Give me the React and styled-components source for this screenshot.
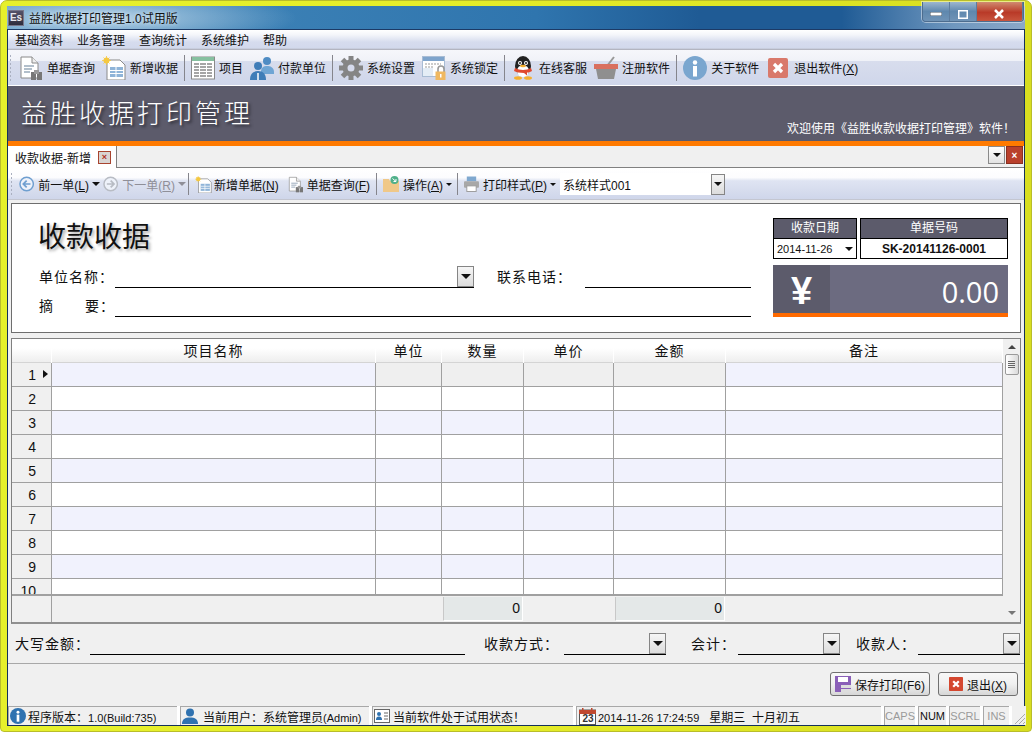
import styled, { createGlobalStyle } from 'styled-components'

const GlobalStyle = createGlobalStyle`
html, body { margin:0; padding:0; background:#fff; overflow:hidden; }
* { box-sizing:border-box; }
body { font-family:"Liberation Sans","Noto Sans CJK SC",sans-serif; font-size:12px; color:#111; }
`

const Frame = styled.div`
width:1032px;
height:732px;
padding:6px 7px;
position:relative;
background:linear-gradient(90deg,#e6f02c 0,#e6ee2a 40%,#d8de20 100%);
border:1px solid #b9bd2a;
border-radius:7px 7px 4px 4px;
`

const Win = styled.div`
height:720px;
margin:-1px -1px 0 -1px;
display:flex;
flex-direction:column;
`

const TitleBar = styled.div`
height:23px;
flex:none;
display:flex;
align-items:center;
gap:5px;
padding-left:1px;
background:
  radial-gradient(ellipse 200px 30px at 90px 12px,rgba(205,225,240,.85),rgba(205,225,240,0)),
  linear-gradient(90deg,#4f8fbe 0,#3b80b5 25%,#2f75ae 52%,#1f5b95 68%,#1f5b95 82%,#6f97bf 93%,#8ba8c8 100%);
`

const AppIcon = styled.div`
width:16px;
height:16px;
background:linear-gradient(#55536a,#2e2d3c);
border:1px solid #77768a;
color:#e8e8ee;
font-size:10px;
font-weight:bold;
line-height:14px;
text-align:center;
`

const AppTitle = styled.div`
font-size:12px;
color:#111;
text-shadow:0 0 4px #e8f2fa;
`

const WinButtons = styled.div`
position:absolute;
top:1px;
right:7px;
height:20px;
width:102px;
display:flex;
border:1px solid #4d6d8f;
border-top:none;
border-radius:0 0 4px 4px;
overflow:hidden;
box-shadow:0 0 0 1px rgba(255,255,255,.45);
`

const WinBtn = styled.div`
width:${p => p.$w}px;
display:flex;
align-items:center;
justify-content:center;
padding-top:5px;
border-right:1px solid #5d7d9f;
background:${p => p.$close ? 'linear-gradient(#d08a70,#b93a28 55%,#c8553e)' : 'linear-gradient(#9db6cf,#5f88ae 50%,#6f93b6)'};
`

const Body = styled.div`
flex:1;
display:flex;
flex-direction:column;
min-height:0;
border:1px solid #14305a;
border-top-color:#1c3a66;
border-bottom-width:1px;
background:#f0f0f0;
`

const MenuBar = styled.div`
height:20px;
flex:none;
display:flex;
align-items:center;
padding:0 0 2px 7px;
gap:14px;
background:linear-gradient(#fff 0,#f3f5fa 25%,#d6dcee 60%,#d2d9ec 90%,#a9a9b2 100%);
`

const MenuItem = styled.span`
font-size:12px;
`

const ToolBar = styled.div`
height:36px;
flex:none;
display:flex;
align-items:center;
gap:7px;
padding-left:1px;
border-bottom:1px solid #fff;
background:linear-gradient(#f6f7fb 0,#f0f2f8 30%,#d8dded 32%,#cfd6ea 100%);
`

const Grip = styled.div`
width:3px;
height:${p => p.$h}px;
flex:none;
background-image:radial-gradient(#aab0c0 1px,transparent 1px);
background-size:3px 4px;
`

const Tool = styled.div`
display:flex;
align-items:center;
flex:none;
gap:${p => p.$gap ?? 4}px;
width:${p => p.$w ? `${p.$w}px` : 'auto'};
margin-left:${p => p.$ml || 0}px;
font-size:12px;
white-space:nowrap;
color:${p => p.$off ? '#8f8f98' : '#111'};
`

const Sep = styled.div`
width:1px;
height:${p => p.$h}px;
flex:none;
margin-left:${p => p.$ml ?? -1}px;
margin-right:${p => p.$mr ?? -1}px;
background:#85858c;
`

const Caret = styled.i`
display:block;
width:0;
height:0;
flex:none;
border-left:${p => p.$s}px solid transparent;
border-right:${p => p.$s}px solid transparent;
border-top:${p => p.$up ? 'none' : `${p.$s}px solid ${p.$c || '#111'}`};
border-bottom:${p => p.$up ? `${p.$s}px solid ${p.$c || '#111'}` : 'none'};
`

const Banner = styled.div`
height:60px;
flex:none;
display:flex;
justify-content:space-between;
background:#5c5b6b;
border-bottom:5px solid #ff7a00;
color:#fff;
`

const BannerTitle = styled.div`
font-size:26px;
letter-spacing:3px;
font-weight:300;
margin:10px 0 0 13px;
line-height:36px;
text-shadow:2px 2px 3px #2a2a33;
`

const BannerNote = styled.div`
align-self:flex-end;
font-size:12px;
margin:0 9px 5px 0;
`

const TabStrip = styled.div`
height:22px;
flex:none;
display:flex;
align-items:flex-start;
justify-content:space-between;
background:#f0f0f0;
border-bottom:1px solid #808080;
`

const Tab = styled.div`
width:109px;
height:22px;
display:flex;
align-items:center;
gap:7px;
padding-left:7px;
background:#fff;
border-right:1px solid #808080;
font-size:12px;
`

const TabClose = styled.div`
width:13px;
height:13px;
display:flex;
align-items:center;
justify-content:center;
border:1px solid #a8442f;
background:#d9d5d3;
color:#b0301f;
font-size:9px;
font-weight:bold;
line-height:1;
`

const TabActions = styled.div`
display:flex;
gap:1px;
padding-right:1px;
`

const SmallDrop = styled.div`
width:17px;
height:18px;
display:flex;
align-items:center;
justify-content:center;
background:${p => p.$red ? '#b9402c' : 'linear-gradient(#fff,#e2e2e2)'};
border:1px solid ${p => p.$red ? '#8a3020' : '#8a8a8a'};
color:#fff;
font-size:10px;
font-weight:bold;
`

const SubBar = styled.div`
height:32px;
flex:none;
display:flex;
align-items:center;
gap:3px;
padding-left:2px;
background:linear-gradient(#fff 0,#fcfcfe 30%,#dfe4f2 40%,#cfd6ea 96%,#bcbcc0 100%);
`

const Combo = styled.div`
width:165px;
height:22px;
display:flex;
justify-content:space-between;
align-items:center;
margin-left:1px;
padding-left:3px;
background:#fff;
font-size:12px;
`

const DropBtn = styled.div`
width:${p => p.$w || 14}px;
height:${p => p.$h || 21}px;
flex:none;
display:flex;
align-items:center;
justify-content:center;
background:linear-gradient(#f6f6f6,#dcdcdc);
border:1px solid #858585;
`

const Content = styled.div`
flex:1;
min-height:0;
display:flex;
flex-direction:column;
padding:3px 3px 0 3px;
`

const Panel = styled.div`
height:130px;
flex:none;
display:flex;
padding-left:27px;
gap:22px;
background:#fff;
border:1px solid #6e6e6e;
`

const PanelLeft = styled.div`
width:712px;
`

const BigTitle = styled.div`
font-size:28px;
line-height:34px;
margin-top:17px;
margin-left:-1px;
height:45px;
text-shadow:2px 2px 3px #aaa;
`

const FieldRow = styled.div`
display:flex;
align-items:flex-end;
height:${p => p.$h}px;
margin-bottom:${p => p.$mb || 0}px;
`

const Label = styled.div`
font-size:14px;
letter-spacing:1px;
width:${p => p.$w}px;
flex:none;
white-space:nowrap;
line-height:20px;
padding-bottom:${p => p.$pb ?? 1}px;
margin-left:${p => p.$ml || 0}px;
display:flex;
justify-content:${p => p.$spread ? 'space-between' : 'flex-start'};
`

const Line = styled.div`
width:${p => p.$w}px;
height:${p => p.$h || 22}px;
flex:none;
display:flex;
justify-content:flex-end;
border-bottom:1px solid #000;
`

const PanelRight = styled.div`
width:235px;
padding-top:14px;
`

const InfoRow = styled.div`
display:flex;
gap:3px;
`

const InfoBox = styled.div`
width:${p => p.$w}px;
border:1px solid #000;
`

const InfoHead = styled.div`
height:20px;
background:#5c5b6b;
border-bottom:1px solid #000;
color:#fff;
font-size:12px;
line-height:19px;
text-align:center;
`

const InfoValue = styled.div`
height:19px;
display:flex;
align-items:center;
justify-content:${p => p.$between ? 'space-between' : 'center'};
padding:0 3px;
background:#fff;
font-size:${p => p.$bold ? 12 : 11}px;
font-weight:${p => p.$bold ? 'bold' : 'normal'};
`

const Amount = styled.div`
height:52px;
margin-top:6px;
display:flex;
background:#6c6b80;
border-bottom:4px solid #ff6a00;
color:#fff;
`

const Yuan = styled.div`
width:57px;
display:flex;
align-items:center;
justify-content:center;
padding-top:4px;
background:#5c5b6b;
font-size:38px;
font-weight:bold;
`

const AmountValue = styled.div`
flex:1;
text-align:right;
padding-right:9px;
font-size:29px;
line-height:54px;
font-family:"Open Sans",sans-serif;
`

const Table = styled.div`
height:286px;
flex:none;
margin-top:5px;
display:flex;
background:#f0f0f0;
border:1px solid #808080;
border-bottom-color:#909090;
border-bottom-width:2px;
`

const TableMain = styled.div`
width:991px;
flex:none;
display:flex;
flex-direction:column;
`

const Cols = styled.div`
display:grid;
grid-template-columns:40px 324px 66px 82px 90px 112px 277px;
`

const HeadRow = styled(Cols)`
height:24px;
flex:none;
background:linear-gradient(#fff 0,#fff 40%,#eeeeee 100%);
border-bottom:1px solid #d4d4d4;
`

const HeadCell = styled.div`
font-size:14px;
letter-spacing:1px;
line-height:24px;
text-align:center;
border-right:1px solid #fff;
`

const Rows = styled.div`
height:233px;
flex:none;
overflow:hidden;
border-bottom:2px solid #a0a0a0;
`

const RowWrap = styled(Cols)`
height:24px;
`

const RowNum = styled.div`
display:flex;
align-items:center;
justify-content:flex-end;
position:relative;
padding-right:15px;
font-size:14px;
background:#f0f0f0;
border-right:1px solid #a0a0a0;
border-bottom:1px solid #a0a0a0;
`

const Marker = styled.i`
position:absolute;
right:3px;
top:7px;
width:0;
height:0;
border-top:4px solid transparent;
border-bottom:4px solid transparent;
border-left:5px solid #111;
`

const Cell = styled.div`
background:${p => p.$bg};
border-right:1px solid #a0a0a0;
border-bottom:1px solid #a0a0a0;
`

const FootRow = styled(Cols)`
flex:1;
min-height:0;
background:#f0f0f0;
`

const FootCell = styled.div`
border-right:${p => p.$line ? '1px solid #a0a0a0' : 'none'};
`

const SumCell = styled.div`
height:24px;
margin:1px 1px 0 1px;
background:#e4e8e8;
border-left:1px solid #c8c8c8;
border-right:1px solid #fff;
border-bottom:1px solid #fff;
font-size:14px;
text-align:right;
padding-right:2px;
line-height:23px;
`

const ScrollTrack = styled.div`
flex:1;
position:relative;
display:flex;
flex-direction:column;
align-items:center;
padding-top:6px;
background:#f0f0f0;
`

const Thumb = styled.div`
width:14px;
height:21px;
margin-top:5px;
display:flex;
flex-direction:column;
align-items:center;
justify-content:center;
gap:1px;
background:linear-gradient(90deg,#fff,#dadada);
border:1px solid #9a9a9a;
border-radius:2px;
`

const ThumbLine = styled.i`
display:block;
width:7px;
height:1px;
background:#666;
`

const ScrollEnd = styled.div`
margin-top:auto;
margin-bottom:7px;
`

const BottomFields = styled.div`
height:39px;
flex:none;
display:flex;
align-items:flex-end;
padding:0 0 8px 4px;
`

const Divider = styled.div`
height:1px;
flex:none;
margin:0 -3px;
background:#a8a8a8;
`

const Actions = styled.div`
flex:1;
display:flex;
justify-content:flex-end;
align-items:flex-start;
gap:8px;
padding:8px 3px 0 0;
`

const Button = styled.div`
width:${p => p.$w}px;
height:24px;
display:flex;
align-items:center;
justify-content:center;
gap:4px;
font-size:12px;
background:linear-gradient(#f8f8f8,#f0f0f0 50%,#d6d6d6);
border:1px solid #707070;
border-radius:3px;
`

const StatusBar = styled.div`
height:19px;
flex:none;
display:flex;
align-items:stretch;
gap:3px;
margin-top:auto;
background:#fff;
position:relative;
`

const StatusCell = styled.div`
width:${p => p.$w}px;
flex:none;
display:flex;
align-items:center;
gap:${p => p.$gap ?? 2}px;
padding-left:1px;
font-size:12px;
white-space:nowrap;
background:#f0f0f0;
border-top:1px solid #a8a8a8;
border-left:1px solid #a8a8a8;
overflow:hidden;
`

const Small = styled.span`
font-size:11px;
`

const Lock = styled.div`
width:${p => p.$w}px;
flex:none;
text-align:center;
font-size:11px;
line-height:18px;
color:${p => p.$on ? '#111' : '#9a9a9a'};
background:#f0f0f0;
border-top:1px solid #a8a8a8;
border-left:1px solid #a8a8a8;
`

const Spacer = styled.div`
flex:1;
display:flex;
justify-content:flex-end;
align-items:flex-end;
background:#f0f0f0;
`

const U = styled.span`
text-decoration:underline;
`

/* ---------- icons ---------- */
const DocGlass = ({ s = 24 }) => <svg width={s} height={s} viewBox="0 0 24 24">
  <path d="M2 1h11l6 6v15H2z" fill="#fff" stroke="#8a8a8a" />
  <path d="M13 1v6h6" fill="#eee" stroke="#8a8a8a" />
  <path d="M5 10h10M5 13h8M5 16h6" stroke="#9ab" strokeWidth="1.5" />
  <rect x="12" y="16" width="5" height="8" fill="#777" /><rect x="18" y="16" width="5" height="8" fill="#777" />
  <rect x="15" y="14" width="5" height="4" fill="#999" />
</svg>
const DocNew = ({ s = 24 }) => <svg width={s} height={s} viewBox="0 0 24 24">
  <path d="M5 4h13l5 5v15H5z" fill="#fff" stroke="#8a8a8a" />
  <rect x="8" y="11" width="13" height="10" fill="#8fb4d8" />
  <path d="M8 14.5h13M8 17.5h13M14 11v10" stroke="#fff" />
  <circle cx="4.5" cy="4.5" r="3" fill="#f5c840" />
  <path d="M4.5 0v9M0 4.500h9M1.500 1.500l6 6M7.500 1.500l-6 6" stroke="#f5c840" strokeWidth=".8" />
</svg>
const TableIcon = () => <svg width="24" height="24" viewBox="0 0 24 24">
  <rect x=".5" y="1" width="23" height="22" fill="#fff" stroke="#8a8a8a" />
  <rect x="1" y="1" width="22" height="4" fill="#86c0a0" />
  <path d="M3 8h18M3 11h18M3 14h18M3 17h18M3 20h18" stroke="#888" strokeWidth="1.4" />
  <path d="M8.500 7v14M15.500 7v14" stroke="#fff" />
</svg>
const People = () => <svg width="24" height="24" viewBox="0 0 24 24">
  <circle cx="17" cy="5" r="4" fill="#4f8cc4" /><path d="M11 16c0-5 3-6 6-6s7 1 7 6v2H11z" fill="#6fa5d4" />
  <circle cx="8" cy="10" r="4" fill="#3f7db8" /><path d="M0 24c0-6 3-9 8-9s8 3 8 9z" fill="#3f7db8" />
  <path d="M8 17v7" stroke="#fff" strokeWidth="1.5" />
</svg>
const Gear = () => <svg width="24" height="24" viewBox="0 0 24 24">
  <g fill="#858585">
    <circle cx="12" cy="12" r="8.500" />
    {[0, 45, 90, 135, 180, 225, 270, 315].map(a => <rect key={a} x="9.500" y="0" width="5" height="5" transform={`rotate(${a} 12 12)`} />)}
  </g>
  <circle cx="12" cy="12" r="3.500" fill="#d6dbec" />
</svg>
const WindowLock = () => <svg width="24" height="24" viewBox="0 0 24 24">
  <rect x=".5" y=".5" width="22" height="20" fill="#fff" stroke="#a8bcd4" />
  <rect x="1" y="1" width="21" height="4" fill="#7ea4cc" />
  <path d="M3 8h16M3 11h8" stroke="#999" strokeDasharray="2 1" />
  <rect x="1" y="12" width="10" height="8" fill="#e4edf6" />
  <path d="M16 16v-3a3 3 0 016 0v3" fill="none" stroke="#999" strokeWidth="1.600" />
  <rect x="13.500" y="15.500" width="10" height="8.500" fill="#f0b860" />
  <rect x="18" y="18" width="1.500" height="3.500" fill="#fff" />
</svg>
const Penguin = () => <svg width="24" height="24" viewBox="0 0 24 24">
  <ellipse cx="12" cy="10" rx="8" ry="10" fill="#222" />
  <ellipse cx="12" cy="15" rx="6" ry="6" fill="#fff" />
  <circle cx="9" cy="7" r="2" fill="#fff" /><circle cx="15" cy="7" r="2" fill="#fff" />
  <circle cx="9" cy="7" r="1" fill="#222" /><circle cx="15" cy="7" r="1" fill="#222" />
  <ellipse cx="12" cy="10" rx="3" ry="1.300" fill="#f5b030" />
  <path d="M4 12c5 2.500 11 2.500 16 0l1 3c-2 1-4 1.500-5 1.500v3l-3-2.500C9 17 5 16 3 15z" fill="#e04a30" />
  <ellipse cx="7" cy="22" rx="4" ry="1.800" fill="#f5b030" /><ellipse cx="17" cy="22" rx="4" ry="1.800" fill="#f5b030" />
</svg>
const Basket = () => <svg width="24" height="24" viewBox="0 0 24 24">
  <path d="M13 10l7-9" stroke="#999" strokeWidth="2" />
  <rect x="0" y="8" width="24" height="5" fill="#d9705f" />
  <path d="M2 13h20l-2 10H4z" fill="#8f8f8f" />
</svg>
const InfoCircle = ({ s = 24 }) => <svg width={s} height={s} viewBox="0 0 24 24">
  <circle cx="12" cy="12" r="12" fill={s < 24 ? '#2f72b0' : '#7aa6cf'} />
  <circle cx="12" cy="6.500" r="2.200" fill="#fff" />
  <rect x="10" y="10" width="4" height="10.500" fill="#fff" />
</svg>
const RedX = ({ s, c = '#d9796b', r = 2 }) => <svg width={s} height={s} viewBox="0 0 20 20">
  <rect width="20" height="20" rx={r} fill={c} />
  <path d="M6 6l8 8M14 6l-8 8" stroke="#fff" strokeWidth="3.200" />
</svg>
const Arrow = ({ c, flip }) => <svg width="16" height="16" viewBox="0 0 16 16">
  <circle cx="8" cy="8" r="7" fill="#eef2fa" stroke={c} strokeWidth="1.500" />
  <path d={flip ? 'M4 8h7M8 4.500L11.500 8 8 11.500' : 'M12 8H5M8 4.500L4.500 8 8 11.500'} fill="none" stroke={c} strokeWidth="1.800" />
</svg>
const FolderGo = () => <svg width="16" height="16" viewBox="0 0 16 16">
  <path d="M0 3h6l1 2h9v11H0z" fill="#f0c888" />
  <circle cx="11.500" cy="4" r="4" fill="#4fb08a" />
  <path d="M9.500 2.500l3.500 3M13 3v2.500h-2.500" fill="none" stroke="#fff" />
</svg>
const Printer = () => <svg width="16" height="16" viewBox="0 0 16 16">
  <rect x="3" y="0" width="10" height="5" fill="#7fa8cf" />
  <rect x="0" y="5" width="16" height="7" rx="1" fill="#a8a8a8" />
  <rect x="3" y="10" width="10" height="6" fill="#fff" stroke="#999" />
</svg>
const Floppy = () => <svg width="16" height="16" viewBox="0 0 16 16">
  <rect width="16" height="16" fill="#8a5fb8" />
  <rect x="3" y="1" width="10" height="5" fill="#fff" />
  <rect x="6" y="9" width="10" height="3" fill="#ddd" /><rect x="6" y="13" width="10" height="3" fill="#ddd" />
</svg>
const User = () => <svg width="16" height="16" viewBox="0 0 16 16">
  <circle cx="8" cy="4.500" r="4" fill="#2f72b0" />
  <path d="M0 16c0-5 3-6.500 8-6.500s8 1.500 8 6.500z" fill="#2f72b0" />
</svg>
const IdCard = () => <svg width="16" height="14" viewBox="0 0 16 14">
  <rect x=".5" y=".5" width="15" height="13" fill="#fff" stroke="#666" />
  <circle cx="5" cy="5" r="2" fill="#2f72b0" /><path d="M2 11c0-3 1.500-3.500 3-3.500S8 8 8 11z" fill="#2f72b0" />
  <path d="M10 4h4M10 7h4M10 10h4" stroke="#666" />
</svg>
const Calendar = () => <svg width="17" height="17" viewBox="0 0 17 17">
  <rect x=".5" y="2" width="16" height="14.500" fill="#fff" stroke="#555" />
  <rect x="0" y="2" width="17" height="4" fill="#c0492f" />
  <rect x="3" y="0" width="1.500" height="4" fill="#c0492f" /><rect x="12" y="0" width="1.500" height="4" fill="#c0492f" />
</svg>
const CalDay = styled.span`
position:relative;
display:block;
width:17px;
height:17px;
flex:none;
margin-left:1px;
`
const CalText = styled.span`
position:absolute;
left:1px;
right:0;
top:6px;
text-align:center;
font-size:10px;
font-weight:bold;
line-height:10px;
color:#333;
`
const ResizeGrip = () => <svg width="14" height="14" viewBox="0 0 14 14">
  <path d="M13 3L3 13M13 7L7 13M13 11L11 13" stroke="#aaa" />
</svg>

const rows = [1, 2, 3, 4, 5, 6, 7, 8, 9, 10]

const RowLine = ({ n }) => {
  const bg = n % 2 ? '#f1f2fd' : '#fff'
  const mid = n === 1 ? '#efefef' : bg
  return <RowWrap>
    <RowNum>{n}{n === 1 && <Marker />}</RowNum>
    <Cell $bg={bg} /><Cell $bg={mid} /><Cell $bg={mid} /><Cell $bg={mid} /><Cell $bg={mid} /><Cell $bg={bg} />
  </RowWrap>
}

const App = () => {
  return (<Frame>
    <GlobalStyle />
    <WinButtons>
      <WinBtn $w={28}><svg width="12" height="4"><rect width="12" height="4" fill="#fff" stroke="#456" /></svg></WinBtn>
      <WinBtn $w={27}><svg width="10" height="9"><rect x=".5" y=".5" width="9" height="8" fill="none" stroke="#fff" strokeWidth="2" /></svg></WinBtn>
      <WinBtn $w={47} $close><svg width="12" height="10"><path d="M2 1l8 8M10 1l-8 8" stroke="#fff" strokeWidth="2.500" /></svg></WinBtn>
    </WinButtons>
    <Win>
      <TitleBar>
        <AppIcon>Es</AppIcon>
        <AppTitle>益胜收据打印管理1.0试用版</AppTitle>
      </TitleBar>
      <Body>
        <MenuBar>
          <MenuItem>基础资料</MenuItem>
          <MenuItem>业务管理</MenuItem>
          <MenuItem>查询统计</MenuItem>
          <MenuItem>系统维护</MenuItem>
          <MenuItem>帮助</MenuItem>
        </MenuBar>
        <ToolBar>
          <Grip $h={28} />
          <Tool><DocGlass /><span>单据查询</span></Tool>
          <Tool><DocNew /><span>新增收据</span></Tool>
          <Sep $h={26} />
          <Tool><TableIcon /><span>项目</span></Tool>
          <Tool><People /><span>付款单位</span></Tool>
          <Sep $h={26} />
          <Tool><Gear /><span>系统设置</span></Tool>
          <Tool><WindowLock /><span>系统锁定</span></Tool>
          <Sep $h={26} />
          <Tool><Penguin /><span>在线客服</span></Tool>
          <Tool><Basket /><span>注册软件</span></Tool>
          <Sep $h={26} />
          <Tool><InfoCircle /><span>关于软件</span></Tool>
          <Tool $ml={2} $gap={6}><RedX s={20} /><span>退出软件(<U>X</U>)</span></Tool>
        </ToolBar>
        <Banner>
          <BannerTitle>益胜收据打印管理</BannerTitle>
          <BannerNote>欢迎使用《益胜收款收据打印管理》软件！</BannerNote>
        </Banner>
        <TabStrip>
          <Tab>收款收据-新增<TabClose>×</TabClose></Tab>
          <TabActions>
            <SmallDrop><Caret $s={4} /></SmallDrop>
            <SmallDrop $red>×</SmallDrop>
          </TabActions>
        </TabStrip>
        <SubBar>
          <Grip $h={24} />
          <Tool $ml={3} $w={70}><Arrow c="#6f9fd0" /><span>前一单(<U>L</U>)</span></Tool>
          <Caret $s={4} />
          <Tool $w={72} $off><Arrow c="#b8bcc4" flip /><span>下一单(<U>R</U>)</span></Tool>
          <Caret $s={4} $c="#8f8f98" />
          <Sep $h={22} $mr={0} />
          <Tool $ml={3} $w={86} $gap={2}><DocNew s={17} /><span>新增单据(<U>N</U>)</span></Tool>
          <Tool $ml={4} $w={82} $gap={3}><DocGlass s={17} /><span>单据查询(<U>F</U>)</span></Tool>
          <Sep $h={22} $ml={3} $mr={0} />
          <Tool $ml={3} $w={60}><FolderGo /><span>操作(<U>A</U>)</span></Tool>
          <Caret $s={3} />
          <Sep $h={22} $ml={2} $mr={0} />
          <Tool $ml={3} $w={83}><Printer /><span>打印样式(<U>P</U>)</span></Tool>
          <Caret $s={3} />
          <Combo>系统样式001<DropBtn><Caret $s={4} /></DropBtn></Combo>
        </SubBar>
        <Content>
          <Panel>
            <PanelLeft>
              <BigTitle>收款收据</BigTitle>
              <FieldRow $h={22} $mb={7}>
                <Label $w={76}>单位名称：</Label>
                <Line $w={359}><DropBtn $w={17}><Caret $s={5} /></DropBtn></Line>
                <Label $w={88} $ml={23}>联系电话：</Label>
                <Line $w={166} />
              </FieldRow>
              <FieldRow $h={22}>
                <Label $w={76} $spread><span>摘</span><span>要：</span></Label>
                <Line $w={636} />
              </FieldRow>
            </PanelLeft>
            <PanelRight>
              <InfoRow>
                <InfoBox $w={84}>
                  <InfoHead>收款日期</InfoHead>
                  <InfoValue $between>2014-11-26<Caret $s={4} /></InfoValue>
                </InfoBox>
                <InfoBox $w={148}>
                  <InfoHead>单据号码</InfoHead>
                  <InfoValue $bold>SK-20141126-0001</InfoValue>
                </InfoBox>
              </InfoRow>
              <Amount>
                <Yuan>¥</Yuan>
                <AmountValue>0.00</AmountValue>
              </Amount>
            </PanelRight>
          </Panel>
          <Table>
            <TableMain>
              <HeadRow>
                <HeadCell />
                <HeadCell>项目名称</HeadCell>
                <HeadCell>单位</HeadCell>
                <HeadCell>数量</HeadCell>
                <HeadCell>单价</HeadCell>
                <HeadCell>金额</HeadCell>
                <HeadCell>备注</HeadCell>
              </HeadRow>
              <Rows>
                {rows.map(n => <RowLine key={n} n={n} />)}
              </Rows>
              <FootRow>
                <FootCell $line />
                <FootCell />
                <FootCell />
                <SumCell>0</SumCell>
                <FootCell />
                <SumCell>0</SumCell>
                <FootCell />
              </FootRow>
            </TableMain>
            <ScrollTrack>
              <Caret $up $s={4} $c="#444" />
              <Thumb><ThumbLine /><ThumbLine /><ThumbLine /><ThumbLine /></Thumb>
              <ScrollEnd><Caret $s={4} $c="#777" /></ScrollEnd>
            </ScrollTrack>
          </Table>
          <BottomFields>
            <Label $w={75}>大写金额：</Label>
            <Line $w={375} />
            <Label $w={80} $ml={19}>收款方式：</Label>
            <Line $w={102}><DropBtn $w={17}><Caret $s={5} /></DropBtn></Line>
            <Label $w={47} $ml={25}>会计：</Label>
            <Line $w={102}><DropBtn $w={17}><Caret $s={5} /></DropBtn></Line>
            <Label $w={62} $ml={16}>收款人：</Label>
            <Line $w={102}><DropBtn $w={17}><Caret $s={5} /></DropBtn></Line>
          </BottomFields>
          <Divider />
          <Actions>
            <Button $w={100}><Floppy /><span>保存打印(F6)</span></Button>
            <Button $w={80}><RedX s={14} c="#d4472f" r={1} /><span>退出(<U>X</U>)</span></Button>
          </Actions>
        </Content>
        <StatusBar>
          <StatusCell $w={169}><InfoCircle s={16} /><span>程序版本：<Small>1.0(Build:735)</Small></span></StatusCell>
          <StatusCell $w={189} $gap={5}><User /><span>当前用户：系统管理员<Small>(Admin)</Small></span></StatusCell>
          <StatusCell $w={201} $gap={3}><IdCard /><span>当前软件处于试用状态！</span></StatusCell>
          <StatusCell $w={305} $gap={2}>
            <CalDay><Calendar /><CalText>23</CalText></CalDay>
            <span><Small>2014-11-26 17:24:59</Small>&nbsp;&nbsp;&nbsp;星期三&nbsp;&nbsp;十月初五</span>
          </StatusCell>
          <Lock $w={31}>CAPS</Lock>
          <Lock $w={28} $on>NUM</Lock>
          <Lock $w={31}>SCRL</Lock>
          <Lock $w={26}>INS</Lock>
          <Spacer><ResizeGrip /></Spacer>
        </StatusBar>
      </Body>
    </Win>
  </Frame>)
}

export default App
